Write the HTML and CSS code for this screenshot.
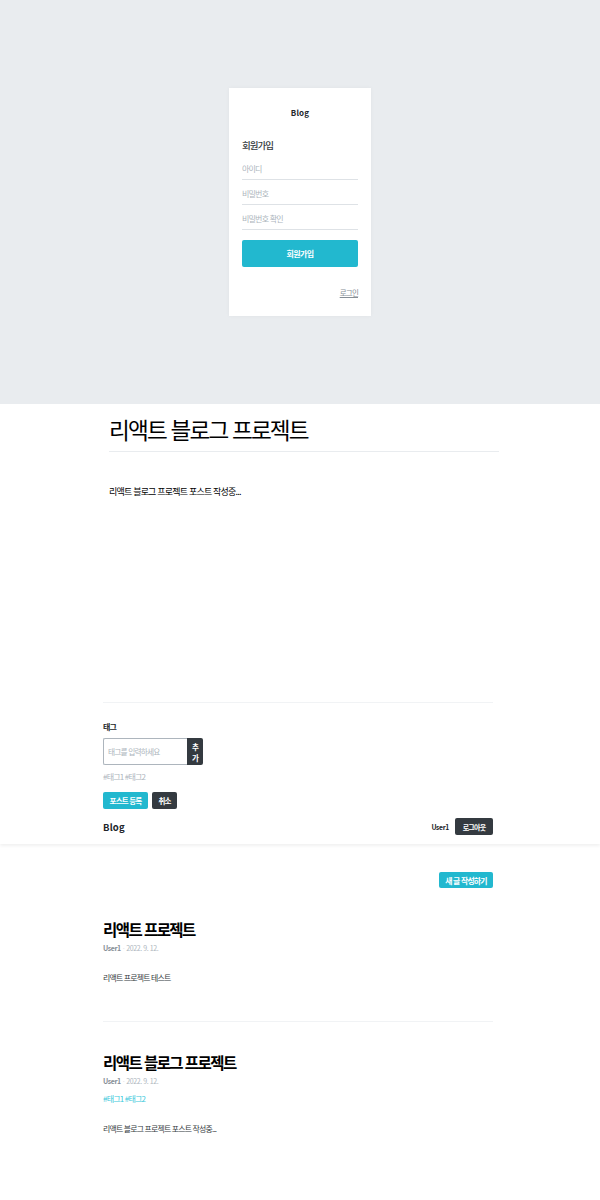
FILE: index.html
```html
<!DOCTYPE html>
<html lang="ko">
<head>
<meta charset="utf-8">
<title>Blog</title>
<link rel="stylesheet" href="styles.css">
</head>
<body>
<section class="auth">
  <div class="auth-card">
    <div class="auth-logo">Blog</div>
    <h3 class="auth-title">회원가입</h3>
    <form class="auth-form">
      <input class="auth-input" placeholder="아이디">
      <input class="auth-input" placeholder="비밀번호">
      <input class="auth-input" placeholder="비밀번호 확인">
      <button type="button" class="auth-button">회원가입</button>
    </form>
    <div class="auth-footer"><a href="#">로그인</a></div>
  </div>
</section>

<section class="editor">
  <div class="editor-title">리액트 블로그 프로젝트</div>
  <div class="editor-body">리액트 블로그 프로젝트 포스트 작성중...</div>
</section>

<section class="tagbox">
  <h4 class="tagbox-title">태그</h4>
  <div class="tag-form">
    <input class="tag-input" placeholder="태그를 입력하세요">
    <button type="button" class="tag-add">추<br>가</button>
  </div>
  <div class="tag-list">#태그1 #태그2</div>
  <div class="write-actions">
    <button type="button" class="btn btn-cyan">포스트 등록</button>
    <button type="button" class="btn btn-dark">취소</button>
  </div>
</section>

<header class="header">
  <div class="header-logo">Blog</div>
  <div class="header-right">
    <span class="header-user">User1</span>
    <button type="button" class="btn btn-dark btn-logout">로그아웃</button>
  </div>
</header>

<main class="post-list">
  <div class="list-actions">
    <button type="button" class="btn btn-cyan btn-new">새 글 작성하기</button>
  </div>
  <article class="post">
    <h2 class="post-title">리액트 프로젝트</h2>
    <div class="post-meta"><b>User1</b><span class="dot">·</span><span>2022. 9. 12.</span></div>
    <p class="post-body">리액트 프로젝트 테스트</p>
  </article>
  <article class="post">
    <h2 class="post-title">리액트 블로그 프로젝트</h2>
    <div class="post-meta"><b>User1</b><span class="dot">·</span><span>2022. 9. 12.</span></div>
    <div class="post-tags"><span>#태그1</span> <span>#태그2</span></div>
    <p class="post-body">리액트 블로그 프로젝트 포스트 작성중...</p>
  </article>
</main>
</body>
</html>
```

FILE: styles.css
```css
* { box-sizing: border-box; }
body {
  margin: 0;
  font-family: "Noto Sans CJK KR", "Noto Sans", sans-serif;
  color: #212529;
  letter-spacing: -0.05em;
  background: #fff;
}
button, input { font-family: inherit; letter-spacing: inherit; }

/* auth */
.auth {
  height: 404px;
  background: #e9ecef;
  display: flex;
  align-items: center;
  justify-content: center;
}
.auth-card {
  width: 142px;
  height: 228px;
  background: #fff;
  padding: 0 13px;
  box-shadow: 0 0 4px rgba(0,0,0,0.04);
}
.auth-logo {
  margin-top: 19px;
  line-height: 12px;
  font-size: 8px;
  font-weight: 700;
  text-align: center;
  letter-spacing: 0.02em;
}
.auth-title {
  margin: 19px 0 0;
  line-height: 14px;
  font-size: 9.5px;
  font-weight: 500;
  letter-spacing: -0.1em;
  color: #343a40;
}
.auth-form { display: flex; flex-direction: column; margin-top: 3px; }
.auth-input {
  height: 25px;
  border: none;
  border-bottom: 1px solid #dee2e6;
  padding: 3px 0 0;
  font-size: 8px;
  outline: none;
}
.auth-input::placeholder { color: #adb5bd; }
.auth-button {
  margin-top: 10px;
  height: 27px;
  border: none;
  border-radius: 2px;
  background: #22b8cf;
  color: #fff;
  font-size: 8px;
  font-weight: 700;
  letter-spacing: -0.08em;
}
.auth-footer {
  margin-top: 20px;
  line-height: 12px;
  text-align: right;
  font-size: 7.5px;
}
.auth-footer a { color: #868e96; text-decoration: underline; }

/* editor */
.editor { width: 390px; margin-left: 109px; padding-top: 8px; }
.editor-title {
  line-height: 36px;
  font-size: 22.6px;
  letter-spacing: -0.08em;
  padding-bottom: 3px;
  border-bottom: 1px solid #e9ecef;
  color: #000;
}
.editor-body {
  margin-top: 34px;
  height: 216px;
  line-height: 12px;
  font-size: 9px;
  color: #000;
}

/* tags */
.tagbox {
  width: 390px;
  margin-left: 103px;
  border-top: 1px solid #f1f3f5;
}
.tagbox-title {
  margin: 18px 0 0;
  line-height: 12px;
  font-size: 8px;
  font-weight: 700;
}
.tag-form { display: flex; margin-top: 5px; height: 27px; width: 100px; }
.tag-input {
  width: 84px;
  border: 1px solid #adb5bd;
  border-right: none;
  border-radius: 2px 0 0 2px;
  padding: 0 4px;
  font-size: 7.7px;
  outline: none;
}
.tag-input::placeholder { color: #adb5bd; }
.tag-add {
  width: 16px;
  border: none;
  border-radius: 0 2px 2px 0;
  background: #343a40;
  color: #fff;
  font-size: 7.5px;
  font-weight: 700;
  line-height: 11px;
  padding: 0;
}
.tag-list {
  margin-top: 6px;
  line-height: 12px;
  font-size: 8px;
  color: #adb5bd;
}
.write-actions { display: flex; gap: 4px; margin-top: 9px; }
.btn {
  border: none;
  border-radius: 2px;
  color: #fff;
  font-weight: 700;
  font-size: 7.5px;
  height: 17px;
  padding: 0;
}
.btn-cyan { background: #22b8cf; }
.btn-dark { background: #343a40; }
.write-actions .btn-cyan { width: 45px; }
.write-actions .btn-dark { width: 25px; }

/* header */
.header {
  height: 35px;
  display: flex;
  align-items: center;
  justify-content: space-between;
  padding: 0 107px 0 103px;
  box-shadow: 0 2px 3px rgba(0,0,0,0.06);
  position: relative;
}
.header-logo { font-size: 9.5px; font-weight: 700; letter-spacing: 0.02em; }
.header-right { display: flex; align-items: center; gap: 6px; }
.header-user { font-size: 6.8px; font-weight: 700; letter-spacing: -0.05em; }
.btn-logout { width: 38px; font-size: 7px; }

/* list */
.post-list { width: 390px; margin-left: 103px; }
.list-actions { display: flex; justify-content: flex-end; margin-top: 28px; }
.btn-new { width: 54px; height: 16px; font-size: 7.9px; }
.post { padding: 31px 0 37px; border-bottom: 1px solid #f1f3f5; }
.post + .post { padding-top: 30px; border-bottom: none; }
.post-title {
  margin: 0;
  line-height: 20px;
  font-size: 15.5px;
  font-weight: 700;
  letter-spacing: -0.1em;
  color: #000;
}
.post-meta {
  margin-top: 3px;
  line-height: 12px;
  font-size: 7px;
  letter-spacing: -0.06em;
  color: #adb5bd;
}
.post-meta b { color: #868e96; }
.post-meta .dot { margin: 0 2px; color: #dee2e6; }
.post-tags {
  margin-top: 6px;
  line-height: 12px;
  font-size: 8px;
  color: #3bc9db;
}
.post-body {
  margin: 18px 0 0;
  line-height: 12px;
  font-size: 7.9px;
  color: #343a40;
}
```
